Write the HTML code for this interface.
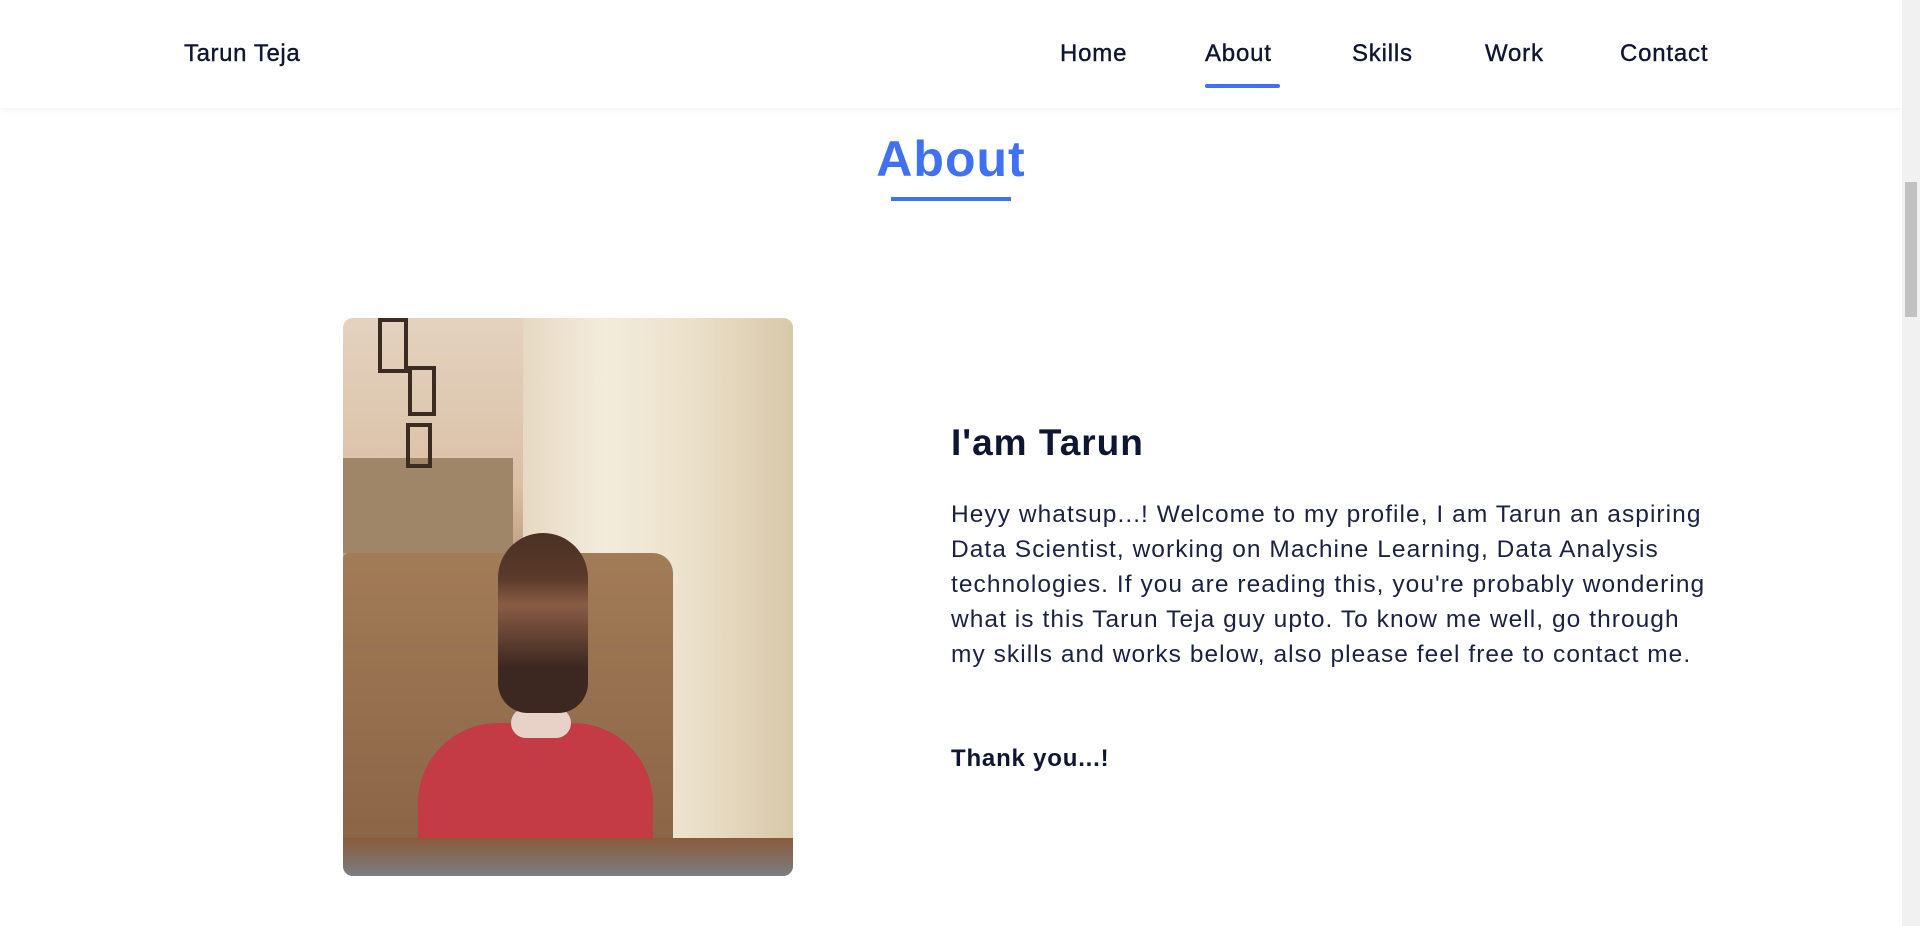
<!DOCTYPE html>
<html><head><meta charset="utf-8"><style>
*{margin:0;padding:0;box-sizing:border-box}
body{width:1920px;height:926px;overflow:hidden;background:#fff;font-family:"Liberation Sans",sans-serif;color:#0f1631;position:relative}
header{position:absolute;left:0;top:0;width:1902px;height:108px;background:#fff;box-shadow:0 2px 6px rgba(0,0,0,.06)}
.logo{position:absolute;left:184px;top:40px;font-size:24px;letter-spacing:0.6px;-webkit-text-stroke:0.4px #0f1631}
nav a{position:absolute;top:40px;font-size:24px;letter-spacing:0.8px;color:#0f1631;text-decoration:none;-webkit-text-stroke:0.4px #0f1631}
.ul{position:absolute;left:1205px;top:84px;width:75px;height:4px;background:#4070f4;border-radius:2px}
h1{position:absolute;left:0;width:1902px;text-align:center;top:130px;font-size:50px;font-weight:700;color:#4070f4;letter-spacing:1px}
.tul{position:absolute;left:891px;top:197px;width:120px;height:4px;background:#4070f4}
.img{position:absolute;left:343px;top:318px;width:450px;height:558px;border-radius:10px;overflow:hidden;background:#e9dccb}
.img div{position:absolute}
h2{position:absolute;left:951px;top:422px;font-size:37px;font-weight:700;letter-spacing:1px}
p.t{position:absolute;left:951px;top:497px;white-space:nowrap;font-size:24.5px;line-height:35px;letter-spacing:1.05px;color:#1b2240}
.ty{position:absolute;left:951px;top:745px;font-size:24px;font-weight:700;letter-spacing:0.8px}
.sb{position:absolute;right:0;top:0;width:18px;height:926px;background:#f1f1f1}
.th{position:absolute;right:3px;top:182px;width:12px;height:135px;background:#c1c1c1}
</style></head><body>
<header>
<div class="logo">Tarun Teja</div>
<nav><a style="left:1060px">Home</a><a style="left:1205px">About</a><a style="left:1352px">Skills</a><a style="left:1485px">Work</a><a style="left:1620px">Contact</a></nav>
<div class="ul"></div>
</header>
<h1>About</h1>
<div class="tul"></div>
<div class="img">
<div style="left:0;top:0;width:450px;height:558px;background:linear-gradient(180deg,#e4d2bf 0%,#d9c1a6 30%,#b08d6a 50%,#9a7656 100%)"></div>
<div style="left:180px;top:0;width:270px;height:560px;background:linear-gradient(90deg,#e6d9c3,#f3ecdc 30%,#ece2cc 60%,#d8c8aa)"></div>
<div style="left:0;top:140px;width:170px;height:95px;background:#a08668"></div>
<div style="left:0;top:235px;width:330px;height:300px;background:linear-gradient(180deg,#a27b57,#8a6446);border-radius:6px 20px 0 0"></div>
<div style="left:35px;top:0;width:30px;height:55px;border:4px solid #3a2c22"></div>
<div style="left:65px;top:48px;width:28px;height:50px;border:4px solid #3a2c22"></div>
<div style="left:63px;top:105px;width:26px;height:45px;border:4px solid #3a2c22"></div>
<div style="left:75px;top:405px;width:235px;height:160px;background:#c43a45;border-radius:80px 80px 0 0"></div>
<div style="left:168px;top:390px;width:60px;height:30px;background:#e8d2c8;border-radius:20px"></div>
<div style="left:155px;top:215px;width:90px;height:180px;background:linear-gradient(180deg,#4a3024 0,#5a3a2a 25%,#8a5c44 40%,#3c2820 75%);border-radius:45px 45px 30px 30px"></div>
<div style="left:0;top:520px;width:450px;height:38px;background:linear-gradient(180deg,#8a5a3a,#7a7e82)"></div>
</div>
<h2>I'am Tarun</h2>
<p class="t">Heyy whatsup...! Welcome to my profile, I am Tarun an aspiring<br>Data Scientist, working on Machine Learning, Data Analysis<br>technologies. If you are reading this, you're probably wondering<br>what is this Tarun Teja guy upto. To know me well, go through<br>my skills and works below, also please feel free to contact me.</p>
<div class="ty">Thank you...!</div>
<div class="sb"><div class="th"></div></div>
</body></html>
